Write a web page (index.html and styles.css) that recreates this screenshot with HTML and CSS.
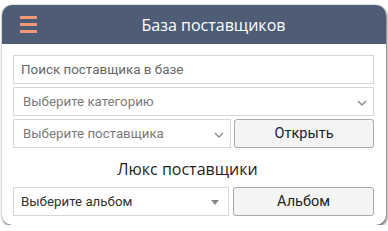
FILE: index.html
```html
<!DOCTYPE html>
<html lang="ru">
<head>
<meta charset="utf-8">
<link rel="stylesheet" href="styles.css">
</head>
<body>
<div class="card">
  <div class="header">
    <div class="burger"><span></span><span></span><span></span></div>
    <div class="title">База поставщиков</div>
  </div>
  <div class="content">
    <div class="field search"><span class="ph">Поиск поставщика в базе</span></div>
    <div class="field sel"><span class="ph">Выберите категорию</span>
      <svg class="chev" width="10" height="6" viewBox="0 0 10 6"><path d="M1 1 L5 5 L9 1" fill="none" stroke="#8a8a8a" stroke-width="1.4"/></svg>
    </div>
    <div class="row">
      <div class="field sel"><span class="ph">Выберите поставщика</span>
        <svg class="chev" width="10" height="6" viewBox="0 0 10 6"><path d="M1 1 L5 5 L9 1" fill="none" stroke="#8a8a8a" stroke-width="1.4"/></svg>
      </div>
      <div class="btn">Открыть</div>
    </div>
    <div class="subtitle">Люкс поставщики</div>
    <div class="row">
      <div class="field sel album"><span class="val">Выберите альбом</span>
        <svg class="tri" width="8" height="5" viewBox="0 0 8 5"><path d="M0 0 L8 0 L4 5 Z" fill="#888"/></svg>
      </div>
      <div class="btn">Альбом</div>
    </div>
  </div>
</div>
</body>
</html>
```
FILE: styles.css
```css
html, body {
  margin: 0;
  padding: 0;
  background: #fff;
}
body {
  padding: 5px 0 0 2px;
  font-family: "Open Sans", "Noto Sans", sans-serif;
}
.card {
  width: 384px;
  height: 220px;
  background: #fff;
  border-radius: 10px;
  box-shadow: 1px 2px 3px rgba(0,0,0,0.55), 0 0 2px rgba(0,0,0,0.35);
  overflow: hidden;
  box-sizing: border-box;
}
.header {
  height: 39px;
  background: #4e5d75;
  display: flex;
  align-items: center;
}
.burger {
  width: 17px;
  margin-left: 18px;
  display: flex;
  flex-direction: column;
  gap: 4px;
}
.burger span {
  display: block;
  height: 3px;
  background: #f39578;
}
.title {
  flex: 1;
  text-align: center;
  color: #fff;
  font-size: 16px;
  margin-right: -4px;
  margin-top: 1px;
}
.content {
  padding: 11px 12px 0 11px;
  display: flex;
  flex-direction: column;
  gap: 3px;
}
.field {
  height: 29px;
  border: 1px solid #d6d6d6;
  box-sizing: border-box;
  display: flex;
  align-items: center;
  padding-left: 8px;
  font-family: Roboto, sans-serif;
  font-size: 13.3px;
  color: #7a7a7a;
  position: relative;
  background: #fff;
}
.field.search {
  font-size: 13.4px;
  color: #666;
  padding-left: 7px;
}
.sel .ph {
  padding-left: 1px;
}
.chev {
  position: absolute;
  right: 6px;
  top: 12px;
}
.tri {
  position: absolute;
  right: 9px;
  top: 12px;
}
.row {
  display: flex;
  gap: 3px;
}
.row .field {
  width: 218px;
}
.row .field.album {
  width: 216px;
  padding-left: 7px;
}
.val {
  color: #333;
}
.btn {
  flex: 1;
  height: 29px;
  box-sizing: border-box;
  border: 1px solid #a9a9a9;
  border-radius: 3px;
  background: #f4f4f4;
  display: flex;
  align-items: center;
  justify-content: center;
  font-family: Roboto, sans-serif;
  font-size: 14.5px;
  color: #222;
}
.row:last-child .btn {
  margin-left: 1px;
}
.subtitle {
  height: 33px;
  display: flex;
  align-items: center;
  justify-content: center;
  font-size: 16px;
  color: #222;
  margin-right: 12px;
  padding-top: 2px;
  box-sizing: border-box;
}
```
